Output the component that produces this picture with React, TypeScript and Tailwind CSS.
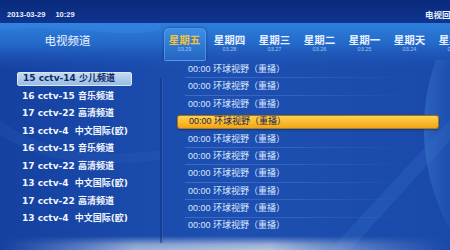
import React from "react";

const channels = [
  "15 cctv-14 少儿频道",
  "16 cctv-15 音乐频道",
  "17 cctv-22 高清频道",
  "13 cctv-4  中文国际(欧)",
  "16 cctv-15 音乐频道",
  "17 cctv-22 高清频道",
  "13 cctv-4  中文国际(欧)",
  "17 cctv-22 高清频道",
  "13 cctv-4  中文国际(欧)",
];

const tabs = [
  { d: "星期五", t: "03.29" },
  { d: "星期四", t: "03.28" },
  { d: "星期三", t: "03.27" },
  { d: "星期二", t: "03.26" },
  { d: "星期一", t: "03.25" },
  { d: "星期天", t: "03.24" },
  { d: "星期六", t: "03.23" },
];

export default function App() {
  return (
    <div className="relative w-[450px] h-[250px] overflow-hidden bg-[#1b4cae] font-['DejaVu_Sans','Noto_Sans_CJK_SC',sans-serif] text-white">
      {/* decorative background */}
      <svg className="absolute inset-0 pointer-events-none" width="450" height="250" viewBox="0 0 450 250">
        <defs>
          <linearGradient id="hdr" x1="0" y1="0" x2="0" y2="1">
            <stop offset="0" stopColor="#2d80de" />
            <stop offset="0.45" stopColor="#2468c8" />
            <stop offset="1" stopColor="#1b4cae" stopOpacity="0" />
          </linearGradient>
          <linearGradient id="body" x1="0" y1="0" x2="1" y2="0">
            <stop offset="0" stopColor="#1541a0" />
            <stop offset="0.5" stopColor="#1d50b2" />
            <stop offset="1" stopColor="#1a49aa" />
          </linearGradient>
          <linearGradient id="glowH" x1="0" y1="0" x2="1" y2="0">
            <stop offset="0" stopColor="#8fa8d6" stopOpacity="0" />
            <stop offset="0.3" stopColor="#b7c6e0" stopOpacity="0.85" />
            <stop offset="0.6" stopColor="#c8d2e4" stopOpacity="0.9" />
            <stop offset="1" stopColor="#8fa8d6" stopOpacity="0" />
          </linearGradient>
          <linearGradient id="glowV" x1="0" y1="0" x2="0" y2="1">
            <stop offset="0" stopColor="#fff" stopOpacity="0" />
            <stop offset="0.6" stopColor="#fff" stopOpacity="0.8" />
            <stop offset="1" stopColor="#fff" stopOpacity="1" />
          </linearGradient>
          <mask id="gm">
            <rect x="0" y="236" width="450" height="14" fill="url(#glowV)" />
          </mask>
          <linearGradient id="arc" x1="0" y1="0" x2="1" y2="0">
            <stop offset="0" stopColor="#3f78d0" stopOpacity="0.55" />
            <stop offset="1" stopColor="#2d66c4" stopOpacity="0.2" />
          </linearGradient>
        </defs>
        <rect x="0" y="0" width="450" height="250" fill="url(#body)" />
        <rect x="0" y="22" width="450" height="50" fill="url(#hdr)" />
        <path d="M0 30 C 60 22, 120 40, 160 30 L160 22 L0 22 Z" fill="#3b8ae2" opacity="0.35" />
        <path d="M436 60 C 418 110, 418 170, 450 230 L450 60 Z" fill="url(#arc)" />
        <path d="M330 250 L450 120 L450 140 L350 250 Z" fill="#3a72cc" opacity="0.25" />
        <path d="M0 120 C 40 150, 90 160, 160 150 L160 160 C 90 170, 40 160, 0 135 Z" fill="#3a72cc" opacity="0.15" />
        <rect x="0" y="236" width="450" height="14" fill="url(#glowH)" mask="url(#gm)" />
        <rect x="160" y="78" width="2" height="165" fill="#0f2f7a" opacity="0.5" />
        <rect x="162" y="78" width="1" height="165" fill="#3a6cc4" opacity="0.45" />
      </svg>

      <div className="relative flex flex-col h-full">
        {/* top bar */}
        <div className="h-[23px] shrink-0 flex items-center pt-[6px] bg-gradient-to-b from-[#0a2a7c] to-[#0f3590] overflow-hidden">
          <div className="w-[425px] shrink-0 pl-[7px] flex items-center gap-[10px] text-[7.5px] font-bold text-[#e8f0ff] font-['Liberation_Sans',sans-serif]">
            <span>2013-03-29</span>
            <span>10:29</span>
          </div>
          <span className="shrink-0 whitespace-nowrap text-[8.5px] font-bold text-[#e8f0ff] font-['Noto_Sans_CJK_SC',sans-serif]">电视回看</span>
        </div>

        {/* header */}
        <div className="h-[38px] shrink-0 flex">
          <div className="w-[135px] shrink-0 flex items-center justify-center pb-[2px] text-[11.5px] font-['Noto_Sans_CJK_SC',sans-serif] text-[#eef4ff]">
            电视频道
          </div>
          <div className="flex pl-[27px] pt-[5px] overflow-hidden">
            {tabs.map((t, i) => (
              <div
                key={i}
                className={
                  i === 0
                    ? "w-[42px] mx-[1.5px] shrink-0 flex flex-col items-center pt-[5px] rounded-t-[5px] rounded-b-[2px] border border-[#5aa2ec]/70 bg-gradient-to-b from-[#3c8fe6] to-[#2465c4] shadow-[0_0_3px_rgba(10,30,90,0.6)]"
                    : "w-[45px] shrink-0 flex flex-col items-center pt-[6px]"
                }
              >
                <span
                  className={
                    "text-[10.5px] leading-[12px] font-bold font-['Noto_Sans_CJK_SC',sans-serif] " +
                    (i === 0 ? "text-[#f3c23a]" : "text-[#e6efff]")
                  }
                >
                  {t.d}
                </span>
                <span className="text-[5.5px] leading-[7px] text-[#a9c1ea] font-['Liberation_Sans',sans-serif]">{t.t}</span>
              </div>
            ))}
          </div>
        </div>

        {/* body */}
        <div className="flex flex-1">
          {/* channels */}
          <div className="w-[162px] shrink-0 pt-[9px] pl-[17px]">
            {channels.map((c, i) => (
              <div key={i} className="h-[17.5px] flex items-center">
                <div
                  className={
                    "w-[115px] h-[14px] flex items-center pl-[5px] whitespace-pre text-[9px] font-bold " +
                    (i === 0
                      ? "rounded-[2px] bg-gradient-to-b from-[#c3daf2] to-[#98bde4] border border-[#d8e8f8] text-[#0f2a66]"
                      : "text-[#f2f6ff]")
                  }
                >
                  {c}
                </div>
              </div>
            ))}
          </div>

          {/* programs */}
          <div className="flex-1 pl-[15px] pr-[11px]">
            {Array.from({ length: 10 }).map((_, i) => (
              <div key={i} className="h-[17.4px] flex flex-col justify-center relative">
                {i === 3 ? (
                  <div className="h-[14px] flex items-center pl-[11px] rounded-[3px] border border-[#6a4a10]/60 bg-gradient-to-b from-[#ffd24a] to-[#f2a510] text-[9px] text-[#1c2450] font-['Liberation_Sans','Noto_Sans_CJK_SC',sans-serif] shadow-[0_1px_2px_rgba(0,0,0,0.35)]">
                    00:00 环球视野（重播）
                  </div>
                ) : (
                  <div className="h-[14px] flex items-center pl-[11px] text-[9px] text-[#dce7ff] font-['Liberation_Sans','Noto_Sans_CJK_SC',sans-serif]">
                    00:00 环球视野（重播）
                  </div>
                )}
                {i !== 2 && i !== 3 && i !== 9 && (
                  <div className="absolute left-[8px] right-[30px] bottom-0 h-px bg-gradient-to-r from-[#6f9ae0]/40 via-[#6f9ae0]/25 to-transparent" />
                )}
              </div>
            ))}
          </div>
        </div>
      </div>
    </div>
  );
}
